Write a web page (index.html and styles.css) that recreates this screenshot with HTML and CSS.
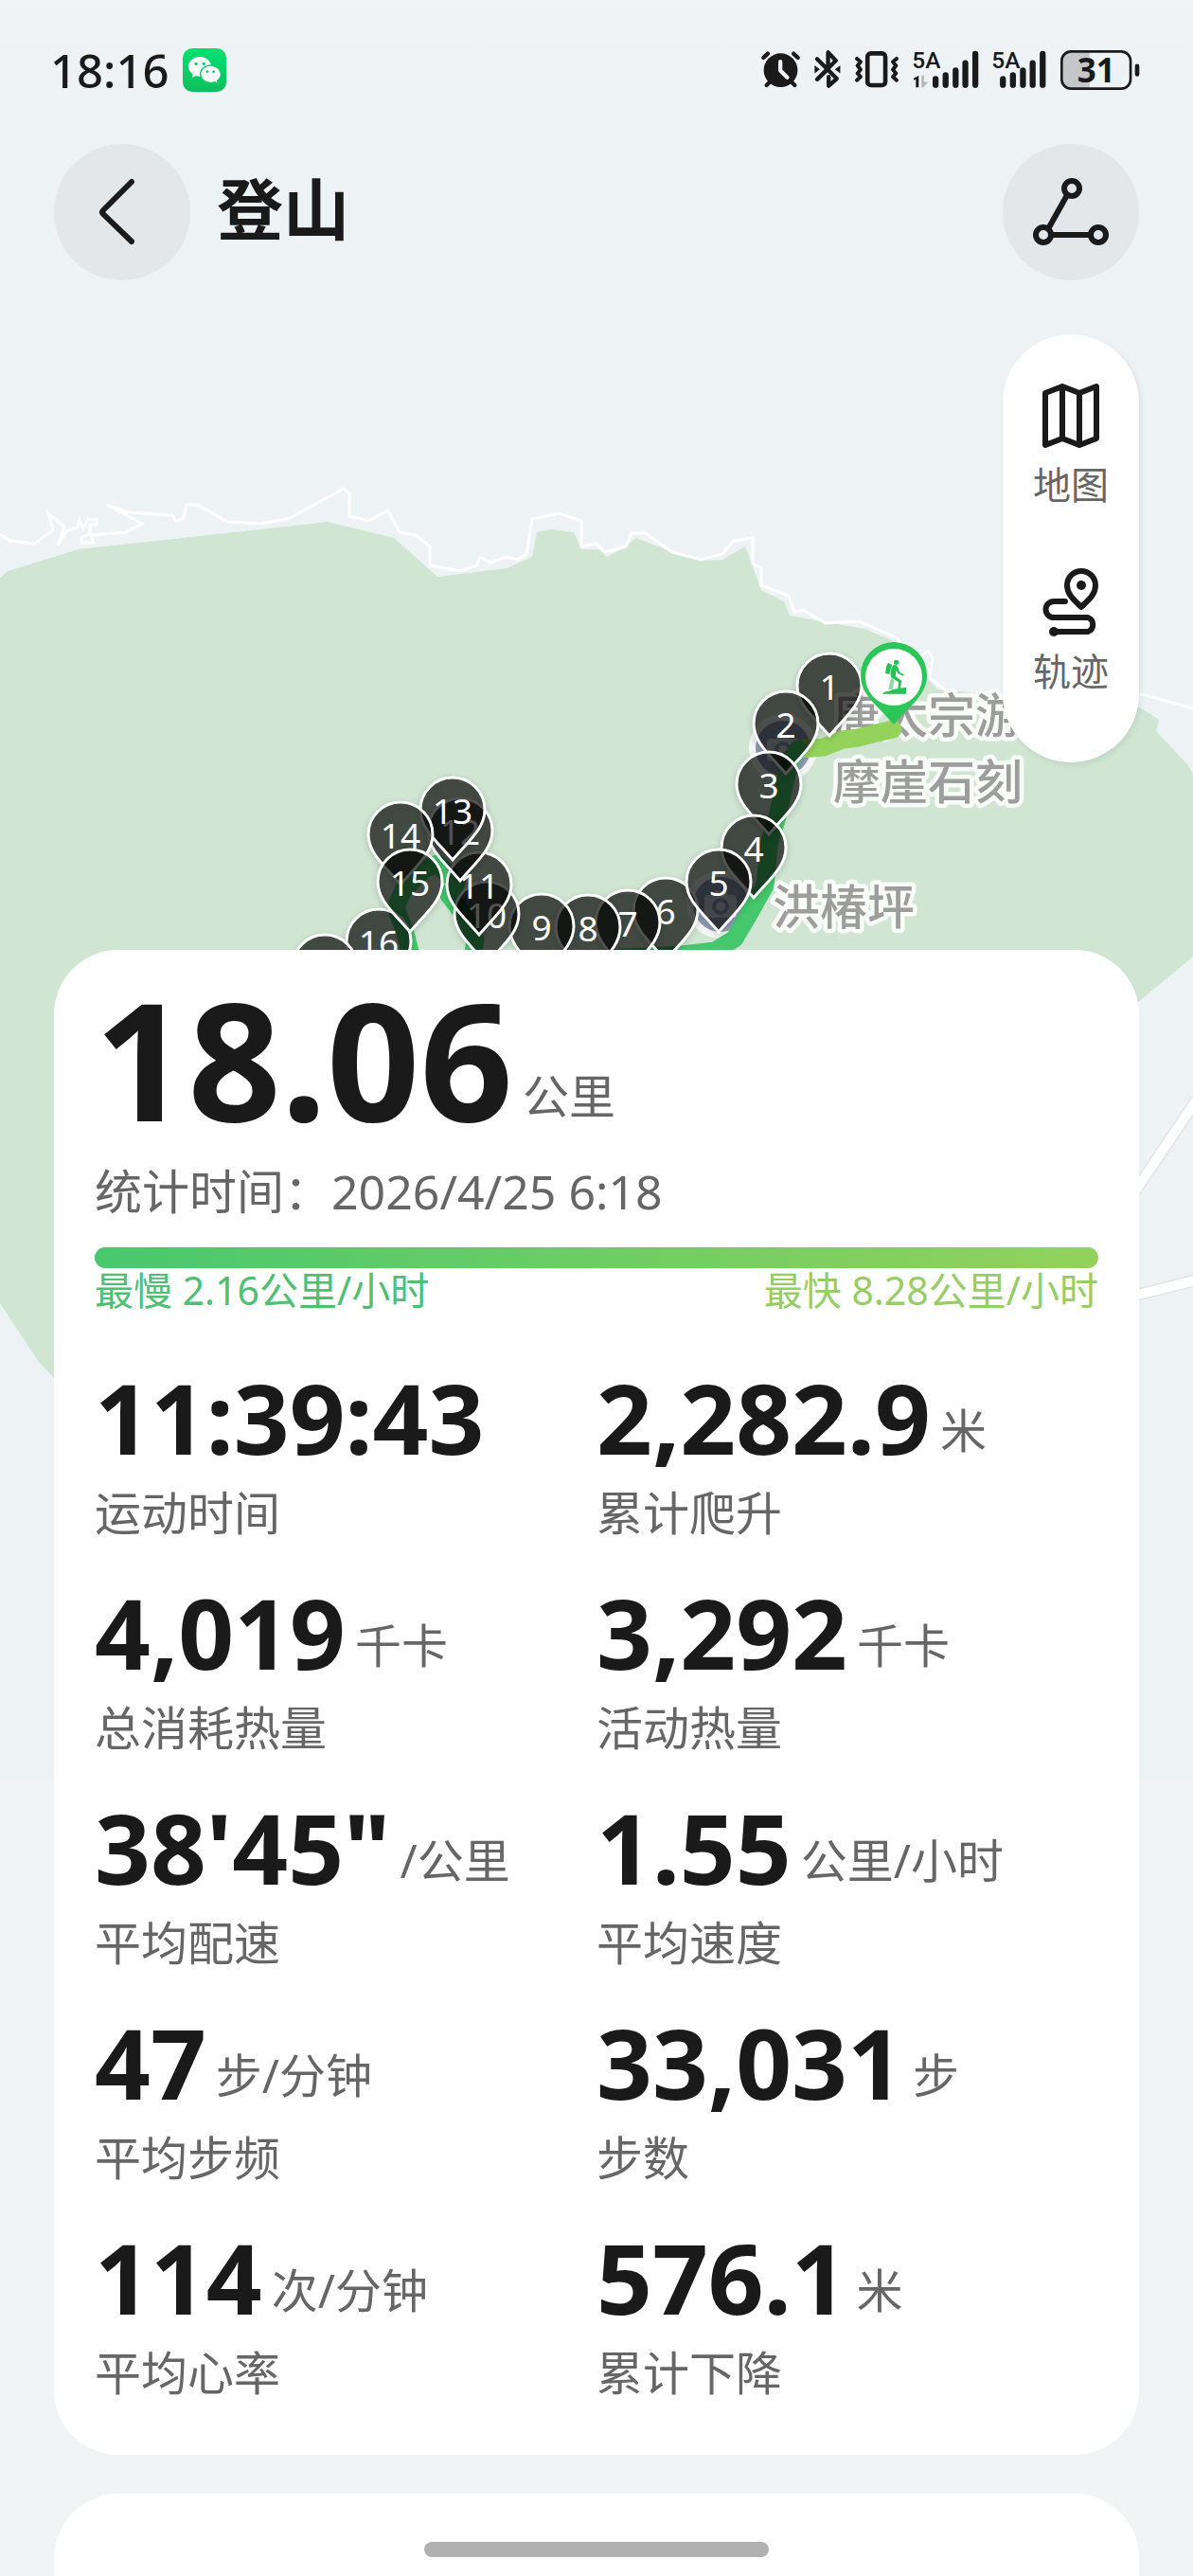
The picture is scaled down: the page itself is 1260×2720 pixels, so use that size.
FILE: index.html
```html
<!DOCTYPE html>
<html lang="zh-CN">
<head>
  <meta charset="UTF-8" />
  <meta name="viewport" content="width=device-width, initial-scale=1.0"/>
  <title>登山</title>
  <link rel="stylesheet" href="styles.css">
</head>
<body>
  <div class="app">
    <!-- map background -->
    <svg class="map" viewBox="0 0 1260 1880" aria-hidden="true">
      <defs>
        <path id="pin" d="M0 0C-19 -22 -34 -34 -34 -53A34 34 0 0 1 34 -53C34 -34 19 -22 0 0Z"/>
        <g id="poi">
          <circle r="36" fill="#f2f7f3"/>
          <circle r="29" fill="#8f9bb5"/>
          <rect x="-17" y="-10" width="34" height="24" rx="4" fill="#d5dae4"/>
          <rect x="-7" y="-14" width="14" height="8" rx="2" fill="#d5dae4"/>
          <circle cy="2" r="7" fill="none" stroke="#8f9bb5" stroke-width="4"/>
        </g>
        <linearGradient id="sky" x1="0" y1="0" x2="0" y2="1">
          <stop offset="0" stop-color="#f1f3f5"/>
          <stop offset="0.05" stop-color="#edf2f5"/>
          <stop offset="1" stop-color="#edf2f5"/>
        </linearGradient>
      </defs>

      <rect width="1260" height="1880" fill="url(#sky)"/>
      <path fill="#d0e6d3" d="M0 610L8 603L83 580L346 551L416 568L462 609L535 600L562 588L567 562L582 559L606 562L614 580L632 580L641 588L661 577L672 568L710 583L740 592L763 591L787 577L804 623L828 635L834 650L884 659L914 664L944 677L990 728L1060 735L1202 746L1224 760L1221 772L1255 808L1260 818V1010L1200 1060L1100 1160L400 1500L57 1455L40 1437L0 1376Z"/>
      <path class="trail" d="M0 564L10 571L36 574L56 560L51 542L68 556L61 576L71 560L82 557L84 549L88 558L93 548L102 549L102 554L95 554L95 564L86 567L86 573L99 573L96 565L133 562L150 553L113 533L135 541L182 544L186 550L194 547L197 533L209 533L240 551L276 553L306 547L363 516L369 521V545L389 550L410 539L422 562L439 565L454 577V597L486 603L503 597L507 588L518 594L535 588L547 591L556 585L562 548L591 542L614 550V577L630 574L639 583L661 577L667 563L682 563L710 583L740 591L763 585L775 571L795 568V595L804 600V618L833 629L839 646L848 644L872 658L907 656L948 674L960 700L980 688L985 694L982 716L1010 738L1190 731L1210 734L1260 748"/>
      <path class="road-edge" d="M1190 1271L1270 1152M1190 1370L1270 1350"/>
      <path class="road" d="M1190 1271L1270 1152M1190 1370L1270 1350"/>

      <use href="#poi" x="827" y="790"/>
      <use href="#poi" x="761" y="955"/>

      <g class="place">
        <text x="880" y="774">唐太宗游</text>
        <text x="880" y="844">摩崖石刻</text>
        <text x="816" y="976">洪椿坪</text>
      </g>

      <g class="track">
        <path stroke="#93d25b" d="M943 770L922 775L906 779L890 781L870 789L845 791"/>
        <path stroke="#45c86d" d="M843 791L836 800L829 826L821 862L812 892L808 935L790 967L776 991L755 1004L720 1008L640 1012"/>
        <path stroke="#45c86d" d="M437 1020L428 985L418 958L426 940L448 918L462 912L482 932L474 945L490 966L502 992L498 1020"/>
      </g>

      <g class="pin">
        <use href="#pin" x="876" y="777"/><text x="876" y="739">1</text>
        <use href="#pin" x="830" y="817"/><text x="830" y="779">2</text>
        <use href="#pin" x="812" y="881"/><text x="812" y="843">3</text>
        <use href="#pin" x="796" y="948"/><text x="796" y="910">4</text>
        <use href="#pin" x="703" y="1014"/><text x="703" y="976">6</text>
        <use href="#pin" x="759" y="984"/><text x="759" y="946">5</text>
        <use href="#pin" x="663" y="1027"/><text x="663" y="989">7</text>
        <use href="#pin" x="621" y="1032"/><text x="621" y="994">8</text>
        <use href="#pin" x="572" y="1031"/><text x="572" y="993">9</text>
        <use href="#pin" x="514" y="1018"/><text x="514" y="980">10</text>
        <use href="#pin" x="506" y="987"/><text x="506" y="949">11</text>
        <use href="#pin" x="486" y="930"/><text x="486" y="892">12</text>
        <use href="#pin" x="478" y="908"/><text x="478" y="870">13</text>
        <use href="#pin" x="423" y="934"/><text x="423" y="896">14</text>
        <use href="#pin" x="400" y="1047"/><text x="400" y="1009">16</text>
        <use href="#pin" x="433" y="984"/><text x="433" y="946">15</text>
        <use href="#pin" x="343" y="1074"/><text x="343" y="1036">17</text>
      </g>

      <!-- start point -->
      <g transform="translate(944 765)">
        <path fill="#2bc558" d="M0 0C-19 -22 -35 -32 -35 -52A35 35 0 0 1 35 -52C35 -32 19 -22 0 0Z"/>
        <circle cy="-50" r="30" fill="#fff"/>
        <g transform="scale(.3333) translate(-146 -297)" fill="#27c055">
          <circle cx="154" cy="100" r="8"/>
          <path d="M128 102l12 5-8 31-13-3 3-22z"/>
          <path d="M146 108c7-1 12 3 14 10l4 13 14 8-2 4-17-8-5-9-3 18 20 14-5 27h-7l2-22-23-15c-5-12-1-35 8-40z"/>
          <path fill="#8fdba8" d="M137 148l11 9-6 30h-13z"/>
          <path d="M109 200l6-6 20-4 12-5 38-6v21z"/>
        </g>
      </g>
    </svg>

    <div class="status-bar">
      <div class="status-left">
        <span class="clock">18:16</span>
        <svg class="wechat" viewBox="0 0 138 138" aria-label="WeChat">
          <defs>
            <linearGradient id="wx" x1="0" y1="0" x2="0" y2="1">
              <stop offset="0" stop-color="#05e170"/><stop offset="1" stop-color="#0fbe5e"/>
            </linearGradient>
          </defs>
          <rect width="138" height="138" rx="30" fill="url(#wx)"/>
          <path fill="#fff" d="M54 27c20 0 36 14 36 31S74 89 54 89c-5 0-9-1-13-2l-11 6 2-11C23 76 18 68 18 58c0-17 16-31 36-31z"/>
          <circle cx="42" cy="49" r="5" fill="#0bcf66"/><circle cx="67" cy="49" r="5" fill="#0bcf66"/>
          <path fill="#fff" stroke="#0bcf66" stroke-width="4" d="M88 54c18 0 33 12 33 28 0 8-4 15-11 20l2 11-11-6c-4 2-8 2-13 2-18 0-32-12-32-27s14-28 32-28z"/>
          <circle cx="78" cy="74" r="4" fill="#0bcf66"/><circle cx="98" cy="74" r="4" fill="#0bcf66"/>
        </svg>
      </div>
      <div class="status-right">
        <svg viewBox="62 101 124 127" aria-hidden="true">
          <circle cx="124" cy="165" r="54"/>
          <path class="line" stroke-width="13" d="M69 125l14-13M179 125l-14-13M79 213l12-12M169 213l-12-12"/>
          <path class="line light" stroke-width="13" d="M123 138v28l22 22"/>
        </svg>
        <svg viewBox="230 101 84 127" aria-hidden="true">
          <path class="line" stroke-width="13" d="M239 129l63 63-26 23v-29M239 194l60-60-25-26v42M240 194l33-32"/>
          <path d="M231 149l17 13-17 13zM313 149l-17 13 17 13z"/>
        </svg>
        <svg viewBox="356 101 139 127" aria-hidden="true">
          <rect class="line" x="396" y="111" width="57" height="102" rx="11" stroke-width="14"/>
          <path class="line" stroke-width="12" d="M362 128l12 10-10 12 10 13-10 12 10 11-12 11M489 128l-12 10 10 12-10 13 10 12-10 11 12 11"/>
        </svg>
        <svg viewBox="542 101 211 127" aria-label="5A 信号">
          <text class="net" x="540" y="159">5A</text>
          <path d="M561 182v38h-9v-26l-7 3v-6z"/>
          <path fill="#b5b7b9" d="M570 182h8v20l14 0-16 18h-6z"/>
          <path class="line" stroke-width="19" d="M615 193v19M647 181v31M679 166v46M710 142v70M742 113v99"/>
        </svg>
        <svg viewBox="800 101 172 127" aria-label="5A 信号">
          <text class="net" x="798" y="159">5A</text>
          <path class="line" stroke-width="19" d="M834 193v19M866 181v31M898 166v46M929 142v70M961 113v99"/>
        </svg>
        <svg viewBox="1017 101 253 127" aria-label="电量 31%">
          <path fill="#c5c6c9" d="M1110 106h-59a29 29 0 0 0-29 29v59a29 29 0 0 0 29 29h59z"/>
          <rect class="line" x="1021" y="105" width="220" height="119" rx="30" stroke-width="8"/>
          <rect x="1255" y="145" width="14" height="40" rx="7"/>
          <text class="battery" x="1131" y="203">31</text>
        </svg>
      </div>
    </div>

    <header class="header">
      <button class="round-btn" type="button" aria-label="返回">
        <svg viewBox="0 0 144 144"><path d="M82 40L52 70q-2 2 0 4L82 103"/></svg>
      </button>
      <h1>登山</h1>
      <button class="round-btn" type="button" aria-label="分享">
        <svg viewBox="0 0 144 144">
          <path d="M68 54L49 88M53 96H92"/>
          <circle cx="73" cy="47" r="8"/><circle cx="43" cy="96" r="8"/><circle cx="101" cy="96" r="8"/>
        </svg>
      </button>
    </header>

    <div class="tools">
      <button type="button">
        <svg viewBox="0 0 72 72"><path d="M9 12L27 5L45 12L63 5V60L45 67L27 60L9 67ZM27 5V60M45 12V67"/></svg>
        地图
      </button>
      <button type="button">
        <svg viewBox="0 0 72 72">
          <path d="M47 41C40 34 32 28 32 18A15 15 0 0 1 62 18C62 28 54 34 47 41Z"/>
          <path d="M30 35H18A8 8 0 0 0 18 52H54A8 8 0 0 1 54 67H18"/>
          <circle class="dot" cx="47" cy="18" r="5"/><circle class="dot" cx="18" cy="67" r="5"/>
        </svg>
        轨迹
      </button>
    </div>

    <main class="card">
      <div class="distance"><span class="num">18.06</span><span class="unit">公里</span></div>
      <p class="date">统计时间：2026/4/25 6:18</p>
      <div class="speed-bar"></div>
      <div class="speed-range">
        <span class="slow">最慢 2.16公里/小时</span>
        <span class="fast">最快 8.28公里/小时</span>
      </div>

      <div class="stats">
        <div class="stat">
          <div class="value"><span class="num">11:39:43</span></div>
          <div class="label">运动时间</div>
        </div>
        <div class="stat">
          <div class="value"><span class="num">2,282.9</span><span class="unit">米</span></div>
          <div class="label">累计爬升</div>
        </div>
        <div class="stat">
          <div class="value"><span class="num">4,019</span><span class="unit">千卡</span></div>
          <div class="label">总消耗热量</div>
        </div>
        <div class="stat">
          <div class="value"><span class="num">3,292</span><span class="unit">千卡</span></div>
          <div class="label">活动热量</div>
        </div>
        <div class="stat">
          <div class="value"><span class="num">38'45"</span><span class="unit">/公里</span></div>
          <div class="label">平均配速</div>
        </div>
        <div class="stat">
          <div class="value"><span class="num">1.55</span><span class="unit">公里/小时</span></div>
          <div class="label">平均速度</div>
        </div>
        <div class="stat">
          <div class="value"><span class="num">47</span><span class="unit">步/分钟</span></div>
          <div class="label">平均步频</div>
        </div>
        <div class="stat">
          <div class="value"><span class="num">33,031</span><span class="unit">步</span></div>
          <div class="label">步数</div>
        </div>
        <div class="stat">
          <div class="value"><span class="num">114</span><span class="unit">次/分钟</span></div>
          <div class="label">平均心率</div>
        </div>
        <div class="stat">
          <div class="value"><span class="num">576.1</span><span class="unit">米</span></div>
          <div class="label">累计下降</div>
        </div>
      </div>
    </main>

    <section class="card next-card"></section>
  </div>

  <div class="home-indicator"></div>
</body>
</html>
```
FILE: styles.css
```css
* {
  box-sizing: border-box;
}

body {
  margin: 0;
  background: #f1f3f5;
  color: #1a1a1a;
  font-family: "Noto Sans", "Noto Sans CJK SC", sans-serif;
}

.app {
  position: relative;
  display: flex;
  flex-direction: column;
  min-height: 100vh;
  padding: 0 57px;
  overflow: hidden;
}

/* map */
.map {
  position: absolute;
  top: 0;
  left: 0;
  width: 100%;
  height: auto;
}

.trail {
  fill: none;
  stroke: #fff;
  stroke-width: 3;
}

.road {
  fill: none;
  stroke: #fff;
  stroke-width: 10;
}

.road-edge {
  fill: none;
  stroke: #e3e4ea;
  stroke-width: 13;
}

.place text {
  font-size: 50px;
  font-weight: 500;
  fill: #9d9d9d;
  stroke: #f8fbf8;
  stroke-width: 9;
  stroke-linejoin: round;
  paint-order: stroke;
}

.track path {
  fill: none;
  stroke-width: 19;
  stroke-linecap: round;
  stroke-linejoin: round;
}

.pin use {
  fill: rgba(0, 0, 0, 0.64);
  stroke: #fff;
  stroke-width: 3;
  filter: drop-shadow(0 2px 3px rgba(0, 0, 0, 0.2));
}

.pin text {
  fill: #fff;
  font-size: 37px;
  text-anchor: middle;
}

/* status bar */
.status-bar {
  position: relative;
  display: flex;
  justify-content: space-between;
  align-items: center;
  height: 148px;
  margin: 0 -1px 0 -4px;
}

.status-left,
.status-right {
  display: flex;
  align-items: center;
  gap: 15px;
}

.clock {
  font-size: 49px;
  font-weight: 500;
  line-height: 60px;
}

.wechat {
  width: 46px;
  height: 46px;
}

.status-right svg {
  height: 42px;
  fill: #1a1a1a;
  overflow: visible;
}

.status-right .line {
  fill: none;
  stroke: #1a1a1a;
  stroke-linecap: round;
  stroke-linejoin: round;
}

.status-right .light {
  stroke: #f1f3f5;
}

.net {
  font-family: Roboto, sans-serif;
  font-size: 74px;
  font-weight: 500;
}

.battery {
  font-size: 106px;
  font-weight: 700;
  text-anchor: middle;
}

/* header */
.header {
  position: relative;
  display: flex;
  align-items: center;
  gap: 28px;
  padding-top: 4px;
}

.header h1 {
  flex: 1;
  margin: 0;
  padding-bottom: 6px;
  font-size: 70px;
  font-weight: 700;
  line-height: 90px;
}

.round-btn {
  width: 144px;
  height: 144px;
  padding: 0;
  border: none;
  border-radius: 50%;
  background: #e3e7e9;
  cursor: pointer;
}

.round-btn svg {
  display: block;
}

.round-btn path,
.round-btn circle,
.tools path {
  fill: none;
  stroke: #1a1a1a;
  stroke-width: 6;
  stroke-linecap: round;
  stroke-linejoin: round;
}

/* map tools */
.tools {
  position: relative;
  align-self: flex-end;
  display: flex;
  flex-direction: column;
  gap: 61px;
  width: 144px;
  margin-top: 57px;
  padding: 50px 0 69px;
  border-radius: 72px;
  background: #fff;
  box-shadow: 2px 3px 6px rgba(0, 0, 0, 0.08);
}

.tools button {
  display: flex;
  flex-direction: column;
  align-items: center;
  gap: 10px;
  padding: 0;
  border: none;
  background: none;
  color: #666;
  font-family: inherit;
  font-size: 40px;
  line-height: 54px;
  cursor: pointer;
}

.tools svg {
  width: 72px;
  height: 72px;
}

.tools .dot {
  fill: #1a1a1a;
}

/* cards */
.card {
  position: relative;
  margin-top: 198px;
  padding: 28px 43px 57px;
  border-radius: 68px;
  background: #fff;
}

.num {
  font-weight: 700;
}

.unit {
  margin-bottom: 8px;
  font-size: 49px;
  line-height: 60px;
  color: #666;
}

.distance,
.value {
  display: flex;
  align-items: flex-end;
  gap: 10px;
}

.distance .num {
  font-size: 172px;
  line-height: 172px;
}

.distance .unit {
  margin-bottom: 16px;
}

.date {
  margin: 25px 0 29px;
  font-size: 50px;
  line-height: 60px;
  color: #666;
}

.speed-bar {
  height: 22px;
  border-radius: 11px;
  background: linear-gradient(to right, #48c86e, #93d25b);
}

.speed-range {
  display: flex;
  justify-content: space-between;
  font-size: 41px;
  line-height: 46px;
}

.slow {
  color: #4fbf74;
}

.fast {
  color: #97cd66;
}

.stats {
  display: grid;
  grid-template-columns: 1fr 1fr;
  row-gap: 44px;
  margin-top: 59px;
}

.value {
  margin-bottom: 19px;
}

.value .num {
  font-size: 103px;
  line-height: 104px;
}

.label {
  font-size: 49px;
  line-height: 60px;
  color: #666;
}

.next-card {
  flex: 1;
  min-height: 86px;
  margin-top: 41px;
  padding: 0;
  border-radius: 68px 68px 0 0;
}

.home-indicator {
  position: fixed;
  bottom: 20px;
  left: 50%;
  width: 364px;
  height: 16px;
  margin-left: -182px;
  border-radius: 8px;
  background: #b1b1b1;
}
```
